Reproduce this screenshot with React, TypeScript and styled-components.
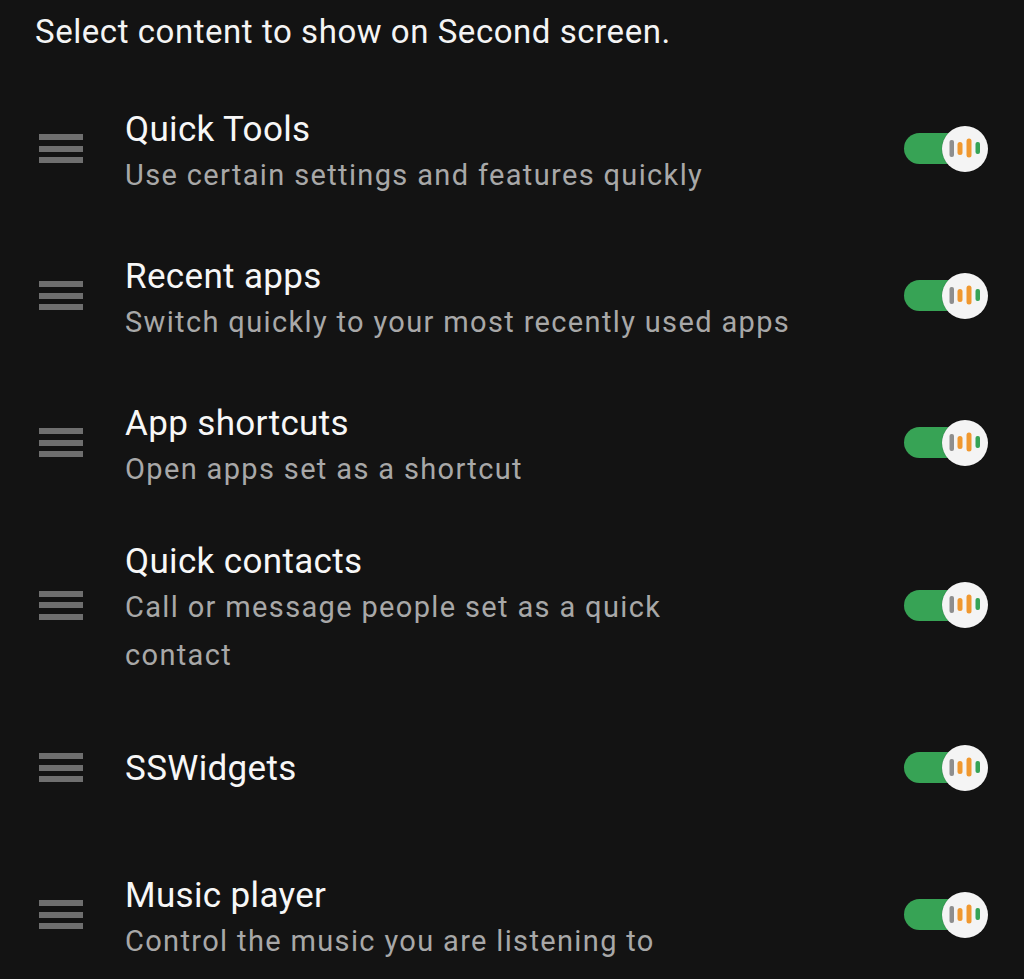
import React from "react";
import styled, { createGlobalStyle } from "styled-components";

const GlobalStyle = createGlobalStyle`
  html, body {
    margin: 0;
    padding: 0;
    background: #131313;
  }
  body {
    font-family: Roboto, "Noto Sans", sans-serif;
    -webkit-font-smoothing: antialiased;
  }
`;

const Page = styled.div`
  width: 1024px;
  min-height: 979px;
  background: #131313;
  overflow: hidden;
`;

const Header = styled.div`
  padding: 8px 20px 0 35px;
  font-size: 33px;
  line-height: 48px;
  letter-spacing: 0.55px;
  color: #f4f4f4;
  margin-bottom: 19px;
`;

const List = styled.div`
  display: flex;
  flex-direction: column;
`;

const Row = styled.div`
  display: flex;
  align-items: center;
  min-height: 147px;
  padding: 15px 36px 15px 39px;
  box-sizing: border-box;
`;

const Handle = styled.div`
  display: flex;
  flex-direction: column;
  gap: 5.5px;
  width: 44px;
  flex: none;
`;

const HandleBar = styled.span`
  display: block;
  height: 6px;
  background: #6f6f6f;
`;

const TextBlock = styled.div<{ $hasSub: boolean }>`
  flex: 1;
  margin-left: 42px;
  padding-top: ${(p) => (p.$hasSub ? "10px" : "3px")};
  min-width: 0;
`;

const Title = styled.div`
  font-size: 35px;
  line-height: 42px;
  letter-spacing: 0.35px;
  color: #f7f7f7;
`;

const Sub = styled.div`
  font-size: 29px;
  line-height: 48px;
  letter-spacing: 1.35px;
  color: #a8a8a8;
  white-space: pre-line;
`;

const Toggle = styled.div`
  position: relative;
  width: 84px;
  height: 46px;
  flex: none;
  display: flex;
  align-items: center;
`;

const Track = styled.div`
  width: 70px;
  height: 31px;
  border-radius: 16px;
  background: #37a355;
`;

const Knob = styled.div`
  position: absolute;
  right: 0;
  top: 0;
  width: 46px;
  height: 46px;
  border-radius: 50%;
  background: #f4f4f4;
  display: flex;
  align-items: center;
  justify-content: center;
  box-shadow: 0 0 1px rgba(0, 0, 0, 0.4);
`;

const KnobIcon = () => (
  <svg width="46" height="46" viewBox="0 0 46 46">
    <rect x="7.5" y="14" width="4.5" height="17" rx="2" fill="#8e8e8e" />
    <rect x="15.5" y="16" width="5" height="13" rx="2.5" fill="#f0982f" />
    <rect x="24.5" y="12.5" width="5" height="19" rx="2.5" fill="#f0982f" />
    <rect x="33.5" y="16" width="4.5" height="12" rx="2" fill="#36a355" />
  </svg>
);

type Item = { title: string; sub?: string };

const items: Item[] = [
  { title: "Quick Tools", sub: "Use certain settings and features quickly" },
  { title: "Recent apps", sub: "Switch quickly to your most recently used apps" },
  { title: "App shortcuts", sub: "Open apps set as a shortcut" },
  { title: "Quick contacts", sub: "Call or message people set as a quick\ncontact" },
  { title: "SSWidgets" },
  { title: "Music player", sub: "Control the music you are listening to" },
];

export default function App() {
  return (
    <>
      <GlobalStyle />
      <Page>
        <Header>Select content to show on Second screen.</Header>
        <List>
          {items.map((it) => (
            <Row key={it.title}>
              <Handle>
                <HandleBar />
                <HandleBar />
                <HandleBar />
              </Handle>
              <TextBlock $hasSub={!!it.sub}>
                <Title>{it.title}</Title>
                {it.sub && <Sub>{it.sub}</Sub>}
              </TextBlock>
              <Toggle>
                <Track />
                <Knob>
                  <KnobIcon />
                </Knob>
              </Toggle>
            </Row>
          ))}
        </List>
      </Page>
    </>
  );
}
